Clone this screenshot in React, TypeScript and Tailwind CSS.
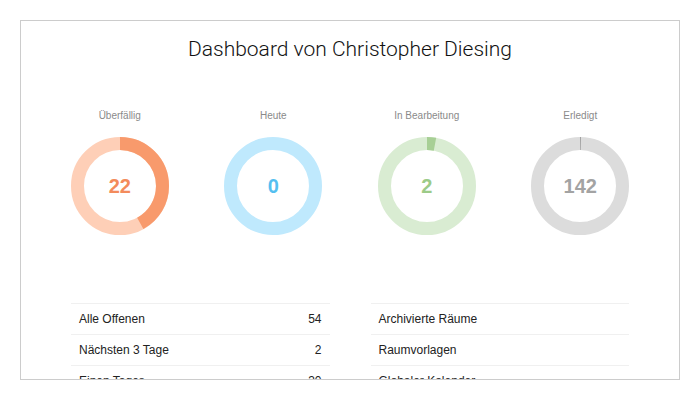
import React from "react";

const charts = [
  { label: "Überfällig", value: 22, frac: 0.42, light: "#fecfb7", dark: "#f89a6c", text: "text-[#f38b5c]" },
  { label: "Heute", value: 0, frac: 0, light: "#bfe9fd", dark: "#5bc2f2", text: "text-[#55bff0]" },
  { label: "In Bearbeitung", value: 2, frac: 0.03, light: "#d9ecd2", dark: "#a7cf95", text: "text-[#9ccb88]" },
  { label: "Erledigt", value: 142, frac: 0.003, light: "#dcdcdc", dark: "#9a9a9a", text: "text-[#a3a3a3]" },
];

const left = [
  ["Alle Offenen", "54"],
  ["Nächsten 3 Tage", "2"],
  ["Einen Tages", "30"],
];

const right = ["Archivierte Räume", "Raumvorlagen", "Globaler Kalender"];

const Ring = ({ frac, light, dark }: { frac: number; light: string; dark: string }) => {
  const r = 42.5;
  const c = 2 * Math.PI * r;
  return (
    <svg width="98" height="98" viewBox="0 0 98 98" className="absolute inset-0">
      <circle cx="49" cy="49" r={r} fill="none" stroke={light} strokeWidth="13" />
      {frac > 0 && (
        <circle
          cx="49"
          cy="49"
          r={r}
          fill="none"
          stroke={dark}
          strokeWidth="13"
          strokeDasharray={`${frac * c} ${c}`}
          transform="rotate(-90 49 49)"
        />
      )}
    </svg>
  );
};

export default function App() {
  return (
    <div className="h-[400px] w-[700px] bg-white pt-5 pl-5 font-['Liberation_Sans',sans-serif]">
      <div className="h-[360px] w-[660px] overflow-hidden border border-[#cccccc]">
        <h1 className="pt-[13px] text-center font-['Roboto',sans-serif] text-[21px] leading-[30px] font-light text-[#111]">
          Dashboard von Christopher Diesing
        </h1>
        <div className="mx-[22px] mt-[45px] grid grid-cols-4">
          {charts.map((c) => (
            <div key={c.label} className="flex flex-col items-center">
              <div className="text-[10px] leading-[14px] text-[#8a8a8a]">{c.label}</div>
              <div className="relative mt-[14px] flex h-[98px] w-[98px] items-center justify-center">
                <Ring frac={c.frac} light={c.light} dark={c.dark} />
                <span className={`relative text-[20px] font-bold ${c.text}`}>{c.value}</span>
              </div>
            </div>
          ))}
        </div>
        <div className="mx-[50px] mt-[68px] grid grid-cols-2 gap-[41px] text-[12px] text-[#222]">
          <div className="border-t border-[#f0f0f0]">
            {left.map(([k, v]) => (
              <div key={k} className="flex h-[31px] items-center justify-between border-b border-[#f0f0f0] px-2">
                <span>{k}</span>
                <span>{v}</span>
              </div>
            ))}
          </div>
          <div className="border-t border-[#f0f0f0]">
            {right.map((k) => (
              <div key={k} className="flex h-[31px] items-center border-b border-[#f0f0f0] px-2">
                <span>{k}</span>
              </div>
            ))}
          </div>
        </div>
      </div>
    </div>
  );
}
